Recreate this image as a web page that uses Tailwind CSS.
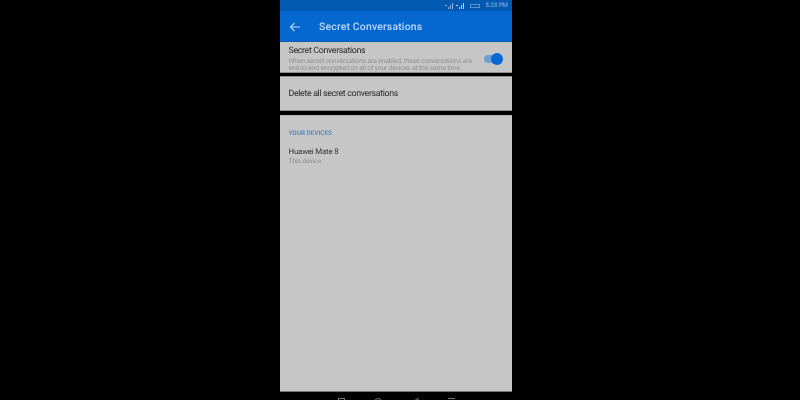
<!DOCTYPE html>
<html lang="en">
<head>
    <meta charset="UTF-8">
    <title>Secret Conversations</title>
    <script src="https://cdn.jsdelivr.net/npm/@tailwindcss/browser@4"></script>
</head>
<body class="bg-black w-[800px] h-[400px] overflow-hidden font-['Roboto',sans-serif] [text-rendering:geometricPrecision]">
    <div class="w-[232px] h-[400px] ml-[280px] flex flex-col blur-[0.5px]">
        <!-- status bar -->
        <div class="h-[11px] bg-[#0259b2] flex items-center justify-end pr-[4px] text-[6.2px] text-[#8fb6e2]">
            <svg class="mr-[3px]" width="8" height="6" viewBox="0 0 8 6"><path d="M0 2h2v1H0zM3 6h1V4H3zM5 6h1V2H5zM7 6h1V0H7z" fill="#8fb6e2"/></svg>
            <svg width="8" height="6" viewBox="0 0 8 6"><path d="M0 2h2v1H0zM3 6h1V4H3zM5 6h1V2H5zM7 6h1V0H7z" fill="#c5d9f0"/></svg>
            <span class="ml-[6px] mr-[5px] w-[10px] h-[4px] border-[0.5px] border-[#5e93d0]"></span>
            <span>5:28 PM</span>
        </div>
        <!-- app bar -->
        <div class="h-[31px] bg-[#0468d0] flex items-center border-b border-[#0a5fb4] pt-[1px]">
            <svg class="ml-[9px]" width="12" height="12" viewBox="0 0 12 12" fill="none" stroke="#b9d5f3" stroke-width="1.1"><path d="M11 6H1.5M5.5 2L1.5 6l4 4"/></svg>
            <span class="ml-[18px] text-[10.4px] font-medium text-[#bfd8f4] tracking-[0.2px]">Secret Conversations</span>
        </div>
        <!-- toggle row -->
        <div class="h-[31px] bg-[#c6c6c6] flex pl-[8.5px] pr-[10px] pt-[4px] border-b border-[#8c8c8c]">
            <div class="flex-1 min-w-0">
                <div class="text-[8.8px] leading-[10px] tracking-[-0.33px] text-[#2a2a2a]">Secret Conversations</div>
                <div class="text-[6.8px] leading-[7.7px] tracking-[-0.17px] mt-[1.5px] text-[#939393] whitespace-nowrap">When secret conversations are enabled, these conversations are<br>end-to-end encrypted on all of your devices at the same time.</div>
            </div>
            <div class="relative w-[18px] h-[8px] rounded-full bg-[#6d9fd6] shrink-0 mt-[8.5px]">
                <div class="absolute right-[-1px] top-[-2px] w-[12px] h-[12px] rounded-full bg-[#0468d0]"></div>
            </div>
        </div>
        <div class="h-[3px]"></div>
        <!-- delete row -->
        <div class="h-[35px] bg-[#c6c6c6] flex items-center pl-[8.5px] border-y border-[#8c8c8c]">
            <span class="text-[8.8px] tracking-[-0.33px] text-[#2a2a2a] mt-[2px]">Delete all secret conversations</span>
        </div>
        <div class="h-[4px]"></div>
        <!-- devices -->
        <div class="h-[277px] bg-[#c6c6c6] border-t border-[#b4b4b4] border-b-[#757575] border-b pl-[8.5px]">
            <div class="mt-[13px] text-[6.4px] leading-[8px] font-medium text-[#3f80c6]">YOUR DEVICES</div>
            <div class="mt-[10px] text-[7.8px] leading-[10px] tracking-[-0.15px] text-[#333333]">Huawei Mate 8</div>
            <div class="text-[6.5px] leading-[8px] text-[#8a8a8a]">This device</div>
        </div>
        <!-- nav bar -->
        <div class="flex-1 relative">
            <div class="absolute top-[6px] left-[58px] w-[7px] h-[7px] border border-[#777777]"></div>
            <div class="absolute top-[6px] left-[94px] w-[8px] h-[8px] rounded-full border border-[#777777]"></div>
            <svg class="absolute top-[6px] left-[132px]" width="8" height="8" viewBox="0 0 8 8" fill="none" stroke="#777777"><path d="M6 0L1 4l5 4z"/></svg>
            <div class="absolute top-[6px] left-[168px] w-[7px] h-[1px] bg-[#777777]"></div>
        </div>
    </div>
</body>
</html>
